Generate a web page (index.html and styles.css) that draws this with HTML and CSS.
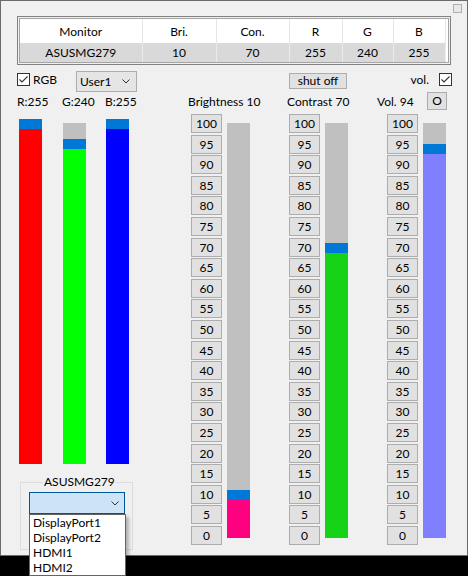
FILE: index.html
```html
<!DOCTYPE html>
<html>
<head>
<meta charset="utf-8">
<link rel="stylesheet" href="styles.css">
</head>
<body>
<div class="window">
  <div class="topstrip"><span class="corner-box"></span></div>

  <div class="table-frame">
    <div class="table-inner">
      <table class="grid">
        <colgroup>
          <col class="w-mon"><col class="w-bri"><col class="w-con"><col class="w-r"><col class="w-g"><col class="w-b">
        </colgroup>
        <thead>
          <tr><th>Monitor</th><th>Bri.</th><th>Con.</th><th>R</th><th>G</th><th>B</th></tr>
        </thead>
        <tbody>
          <tr><td>ASUSMG279</td><td>10</td><td>70</td><td>255</td><td>240</td><td>255</td></tr>
        </tbody>
      </table>
    </div>
  </div>

  <div class="row-a">
    <label class="check rgb-check">
      <span class="box"><svg width="11" height="11" viewBox="0 0 11 11"><path d="M1.5 5.5 L4 8 L9.5 2.5" fill="none" stroke="#333" stroke-width="1.1"/></svg></span>
      <span>RGB</span>
    </label>
    <div class="combo user-combo">
      <span>User1</span>
      <svg class="chev" width="8" height="5" viewBox="0 0 8 5"><path d="M0.5 0.5 L4 4 L7.5 0.5" fill="none" stroke="#333" stroke-width="1"/></svg>
    </div>
    <button class="btn shut">shut off</button>
    <label class="check vol-check">
      <span>vol.</span>
      <span class="box"><svg width="11" height="11" viewBox="0 0 11 11"><path d="M1.5 5.5 L4 8 L9.5 2.5" fill="none" stroke="#333" stroke-width="1.1"/></svg></span>
    </label>
  </div>

  <div class="row-b">
    <div class="rgb-panel">
      <div class="channels">
        <div class="chan chan-r">
          <div class="chan-label">R:255</div>
          <div class="chan-bar"><div class="marker"></div><div class="fill red" style="height:335px"></div></div>
        </div>
        <div class="chan chan-g">
          <div class="chan-label">G:240</div>
          <div class="chan-bar"><div class="marker"></div><div class="fill green" style="height:315px"></div></div>
        </div>
        <div class="chan chan-b">
          <div class="chan-label">B:255</div>
          <div class="chan-bar"><div class="marker"></div><div class="fill blue" style="height:335px"></div></div>
        </div>
      </div>
      <fieldset class="group">
        <legend>ASUSMG279</legend>
        <div class="combo source-combo">
          <svg class="chev" width="8" height="5" viewBox="0 0 8 5"><path d="M0.5 0.5 L4 4 L7.5 0.5" fill="none" stroke="#333" stroke-width="1"/></svg>
        </div>
      </fieldset>
    </div>

    <div class="slider bri">
      <div class="slider-head"><span class="lbl">Brightness 10</span></div>
      <div class="slider-body">
        <div class="steps">
          <button class="btn step">100</button><button class="btn step">95</button><button class="btn step">90</button><button class="btn step">85</button><button class="btn step">80</button><button class="btn step">75</button><button class="btn step">70</button><button class="btn step">65</button><button class="btn step">60</button><button class="btn step">55</button><button class="btn step">50</button><button class="btn step">45</button><button class="btn step">40</button><button class="btn step">35</button><button class="btn step">30</button><button class="btn step">25</button><button class="btn step">20</button><button class="btn step">15</button><button class="btn step">10</button><button class="btn step">5</button><button class="btn step">0</button>
        </div>
        <div class="track"><div class="marker"></div><div class="fill pink" style="height:38px"></div></div>
      </div>
    </div>

    <div class="slider con">
      <div class="slider-head"><span class="lbl">Contrast 70</span></div>
      <div class="slider-body">
        <div class="steps">
          <button class="btn step">100</button><button class="btn step">95</button><button class="btn step">90</button><button class="btn step">85</button><button class="btn step">80</button><button class="btn step">75</button><button class="btn step">70</button><button class="btn step">65</button><button class="btn step">60</button><button class="btn step">55</button><button class="btn step">50</button><button class="btn step">45</button><button class="btn step">40</button><button class="btn step">35</button><button class="btn step">30</button><button class="btn step">25</button><button class="btn step">20</button><button class="btn step">15</button><button class="btn step">10</button><button class="btn step">5</button><button class="btn step">0</button>
        </div>
        <div class="track"><div class="marker"></div><div class="fill lime" style="height:285px"></div></div>
      </div>
    </div>

    <div class="slider vol">
      <div class="slider-head"><span class="lbl">Vol. 94</span><button class="btn obtn">O</button></div>
      <div class="slider-body">
        <div class="steps">
          <button class="btn step">100</button><button class="btn step">95</button><button class="btn step">90</button><button class="btn step">85</button><button class="btn step">80</button><button class="btn step">75</button><button class="btn step">70</button><button class="btn step">65</button><button class="btn step">60</button><button class="btn step">55</button><button class="btn step">50</button><button class="btn step">45</button><button class="btn step">40</button><button class="btn step">35</button><button class="btn step">30</button><button class="btn step">25</button><button class="btn step">20</button><button class="btn step">15</button><button class="btn step">10</button><button class="btn step">5</button><button class="btn step">0</button>
        </div>
        <div class="track"><div class="marker"></div><div class="fill violet" style="height:384px"></div></div>
      </div>
    </div>
  </div>

  <ul class="dropdown">
    <li>DisplayPort1</li>
    <li>DisplayPort2</li>
    <li>HDMI1</li>
    <li>HDMI2</li>
  </ul>
</div>
</body>
</html>
```

FILE: styles.css
```css
html, body {
  margin: 0;
  padding: 0;
  background: #000;
}

body {
  width: 468px;
  height: 576px;
  font-family: Lato, "Noto Sans", sans-serif;
  font-size: 12px;
  color: #000;
}

.window {
  position: relative;
  width: 468px;
  height: 556px;
  box-sizing: border-box;
  border: 1px solid #6b6b6b;
  background: #f0f0f0;
}

/* top strip with tiny square */
.topstrip {
  display: flex;
  justify-content: flex-end;
  height: 9px;
  padding: 3px 5px 0 0;
}

.corner-box {
  width: 9px;
  height: 9px;
  box-sizing: border-box;
  border: 1px solid #b0b0b0;
  background: #e8e8e8;
}

/* table */
.table-frame {
  margin: 3px 0 0 16px;
  width: 434px;
  box-sizing: border-box;
  border: 1px solid #828282;
  padding: 1px;
}

.table-inner {
  border: 1px solid #a5a5a5;
  background: #fff;
  height: 43px;
}

.grid {
  border-collapse: collapse;
  table-layout: fixed;
  width: 425px;
  font-size: 12px;
}

.w-mon { width: 122px; }
.w-bri { width: 74px; }
.w-con { width: 73px; }
.w-r { width: 53px; }
.w-g { width: 51px; }
.w-b { width: 52px; }

.grid th {
  height: 24px;
  padding: 0;
  font-weight: normal;
  text-align: center;
  border-right: 1px solid #e5e5e5;
}

.grid td {
  height: 19px;
  padding: 0;
  text-align: center;
  background: #d9d9d9;
  border-right: 1px solid #ebebeb;
}

/* generic */
.btn {
  font: inherit;
  color: #000;
  margin: 0;
  padding: 0;
  border: 1px solid #adadad;
  background: #e1e1e1;
  box-sizing: border-box;
  text-align: center;
}

.check {
  display: flex;
  align-items: center;
  gap: 3px;
  line-height: 13px;
}

.box {
  width: 13px;
  height: 13px;
  box-sizing: border-box;
  border: 1px solid #333;
  background: #fff;
  display: flex;
}

.combo {
  box-sizing: border-box;
  display: flex;
  align-items: center;
}

/* row with RGB checkbox, profile combo, shut off, vol */
.row-a {
  display: flex;
  align-items: flex-start;
  height: 21px;
  margin-top: 6px;
  padding: 0 15px 0 16px;
}

.rgb-check {
  width: 59px;
  margin-top: 2px;
}

.user-combo {
  width: 61px;
  height: 21px;
  border: 1px solid #adadad;
  background: #e5e5e5;
  justify-content: space-between;
  padding: 0 6px 0 3px;
}

.shut {
  margin-left: 152px;
  margin-top: 2px;
  width: 58px;
  height: 16px;
  line-height: 14px;
}

.vol-check {
  margin-left: auto;
  margin-top: 2px;
  gap: 10px;
}

/* main row */
.row-b {
  display: flex;
  padding-left: 16px;
}

.rgb-panel {
  width: 174px;
  flex: none;
  display: flex;
  flex-direction: column;
}

.channels {
  display: flex;
  padding-left: 2px;
}

.chan {
  width: 23px;
  display: flex;
  flex-direction: column;
}

.chan-g { margin-left: 21px; }
.chan-b { margin-left: 20px; }

.chan-label {
  margin-top: 2px;
  height: 16px;
  line-height: 16px;
  white-space: nowrap;
  margin-left: -1px;
}

.chan-r .chan-label { margin-left: -2px; }

.chan-bar {
  margin-top: 9px;
  height: 345px;
  background: #c0c0c0;
  display: flex;
  flex-direction: column;
  justify-content: flex-end;
}

.chan-g .chan-bar {
  margin-top: 13px;
  height: 341px;
}

.marker {
  flex: none;
  height: 10px;
  background: #0078d7;
}

.fill { flex: none; }
.red { background: #ff0000; }
.green { background: #00ff00; }
.blue { background: #0000ff; }
.pink { background: #ff0080; }
.lime { background: #17d317; }
.violet { background: #8080ff; }

/* group box */
.group {
  margin: 10px 0 0 3px;
  width: 113px;
  min-width: 0;
  box-sizing: border-box;
  border: 1px solid #dcdcdc;
  padding: 0 0 35px 0;
}

.group legend {
  margin-left: 22px;
  padding: 0 1px;
  line-height: 16px;
}

.source-combo {
  margin: 2px 0 0 8px;
  width: 96px;
  height: 22px;
  border: 1px solid #005499;
  background: #cce4f7;
  justify-content: flex-end;
  padding-right: 5px;
}

/* sliders */
.slider {
  width: 59px;
  flex: none;
  display: flex;
  flex-direction: column;
}

.slider + .slider { margin-left: 39px; }

.slider-head {
  height: 18px;
  display: flex;
  align-items: flex-start;
  white-space: nowrap;
}

.slider-head .lbl {
  margin-top: 2px;
  line-height: 16px;
}

.bri .slider-head { margin-left: -3px; }
.con .slider-head { margin-left: -2px; }
.vol .slider-head {
  margin-left: -10px;
  width: 70px;
  justify-content: space-between;
}

.obtn {
  width: 20px;
  height: 18px;
  line-height: 16px;
}

.slider-body {
  display: flex;
  gap: 5px;
  margin-top: 4px;
}

.steps {
  display: flex;
  flex-direction: column;
  gap: 1.6px;
  width: 31px;
  flex: none;
}

.step {
  width: 31px;
  height: 19px;
  line-height: 17px;
}

.track {
  margin-top: 9px;
  width: 23px;
  height: 415px;
  flex: none;
  background: #c0c0c0;
  display: flex;
  flex-direction: column;
  justify-content: flex-end;
}

/* open dropdown list of the source combo */
.dropdown {
  position: absolute;
  left: 28px;
  top: 513px;
  width: 97px;
  box-sizing: border-box;
  margin: 0;
  padding: 0;
  list-style: none;
  border: 1px solid #646464;
  background: #fff;
  box-shadow: 3px 3px 3px rgba(0, 0, 0, 0.25);
}

.dropdown li {
  height: 15px;
  line-height: 15px;
  padding-left: 3px;
  white-space: nowrap;
}
```
